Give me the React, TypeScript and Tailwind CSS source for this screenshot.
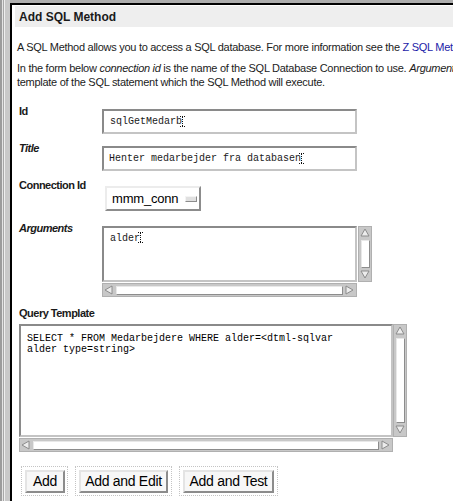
import React from "react";

const sans = { fontFamily: '"Liberation Sans", Arial, sans-serif' };
const mono = { fontFamily: '"Liberation Mono", "Courier New", monospace' };

function Cursor() {
  return (
    <svg width="5" height="11" viewBox="0 0 5 11" className="inline-block -ml-[2px] align-[-2px]">
      <path d="M0 0.5h1M2 0.5h1M4 0.5h1M0 10.5h1M2 10.5h1M4 10.5h1" stroke="#111" strokeWidth="1" />
      <path d="M2.5 1v9" stroke="#111" strokeWidth="1" strokeDasharray="1 1" />
    </svg>
  );
}

function Arrow({ dir }: { dir: "up" | "down" | "left" | "right" }) {
  const pts: Record<string, string> = {
    up: "5,1 9,8 1,8",
    down: "1,1 9,1 5,8",
    left: "1,5 8,1 8,9",
    right: "1,1 1,9 8,5",
  };
  return (
    <svg width="10" height="10" viewBox="0 0 10 10" className="shrink-0">
      <polygon points={pts[dir]} fill="#ececec" stroke="#8c8c8c" strokeWidth="1" />
    </svg>
  );
}

function VScroll({ tall }: { tall?: boolean }) {
  return (
    <div
      className={
        "w-[14px] bg-[#c8c8c8] border border-[#b0b0b0] flex flex-col items-center py-[1px] " +
        (tall ? "h-[113px]" : "h-[56px]")
      }
    >
      <Arrow dir="up" />
      <div className="flex-1 w-[9px] my-[2px] bg-white border border-t-[#e8e8e8] border-l-[#e8e8e8] border-b-[#8c8c8c] border-r-[#8c8c8c]" />
      <Arrow dir="down" />
    </div>
  );
}

function HScroll({ wide }: { wide?: boolean }) {
  return (
    <div
      className={
        "h-[14px] bg-[#c8c8c8] border border-[#b0b0b0] flex items-center px-[1px] " +
        (wide ? "w-[374px]" : "w-[255px]")
      }
    >
      <Arrow dir="left" />
      <div className="flex-1 h-[9px] mx-[2px] bg-white border border-t-[#e8e8e8] border-l-[#e8e8e8] border-b-[#8c8c8c] border-r-[#8c8c8c]" />
      <Arrow dir="right" />
    </div>
  );
}

function Btn({ label, w, iw }: { label: string; w: string; iw: string }) {
  return (
    <div className={"h-[30px] border border-dotted border-[#c4c4c4] flex items-center pl-[3px] " + w}>
      <div
        className={
          "h-[23px] bg-[#f7f7f7] border-2 border-t-[#e4e4e4] border-l-[#e4e4e4] border-b-[#8c8c8c] border-r-[#8c8c8c] flex items-center justify-center text-[14px] tracking-[-0.3px] text-black whitespace-nowrap " +
          iw
        }
        style={sans}
      >
        {label}
      </div>
    </div>
  );
}

const inputBorder =
  "border-2 border-t-[#8a8a8a] border-l-[#8a8a8a] border-b-[#c4c4c4] border-r-[#c4c4c4] bg-white";

export default function App() {
  return (
    <div className="w-[453px] h-[501px] overflow-hidden flex bg-white" style={sans}>
      {/* left frame gutter */}
      <div className="flex h-full shrink-0">
        <div className="w-[2px] bg-[#9c9c9c]" />
        <div className="w-[1px] bg-[#e4e4e4]" />
        <div className="w-[1px] bg-[#a8a8a8]" />
        <div className="w-[1px] bg-[#eeeeee]" />
        <div className="w-[5px] bg-[#c9c9c9]" />
      </div>
      <div className="flex-1 flex flex-col min-w-0">
        <div className="h-[3px] bg-[#adadad] shrink-0" />
        <div className="flex-1 border-t-2 border-l-2 border-black bg-white min-w-0 overflow-hidden">
          {/* title bar */}
          <div className="ml-[3px] mt-[1px] h-[21px] bg-[#eeeeee] pl-[4px] pt-[1px] text-[12px] font-bold leading-[21px] text-[#1a1a1a] whitespace-nowrap">
            Add SQL Method
          </div>

          <div className="pl-[5px] text-[11px] leading-[13px] tracking-[-0.28px] text-[#1c1c1c] whitespace-nowrap">
            <div className="mt-[14px]">
              A SQL Method allows you to access a SQL database. For more information see the{" "}
              <span className="text-[#1c1ca8]">Z SQL Methods User&apos;s Guide</span>.
            </div>
            <div className="mt-[8px]">
              In the form below <i>connection id</i> is the name of the SQL Database Connection to use.{" "}
              <i>Arguments</i> are the arguments that the SQL Method takes. The <i>query template</i> is the
            </div>
            <div className="mt-[1px]">template of the SQL statement which the SQL Method will execute.</div>
          </div>

          {/* form */}
          <div className="pl-[7px] text-[11px] leading-[13px] text-[#1a1a1a]">
            {/* Id */}
            <div className="flex mt-[16px]">
              <div className="w-[83px] font-bold tracking-[-0.5px]">Id</div>
              <div className={"mt-[4px] w-[255px] h-[25px] flex items-center pl-[6px] text-[10px] " + inputBorder} style={mono}>
                sqlGetMedarb
                <Cursor />
              </div>
            </div>
            {/* Title */}
            <div className="flex mt-[8px]">
              <div className="w-[83px] font-bold italic tracking-[-0.5px]">Title</div>
              <div className={"mt-[4px] w-[255px] h-[25px] flex items-center pl-[5px] text-[10px] " + inputBorder} style={mono}>
                Henter medarbejder fra databasen
                <Cursor />
              </div>
            </div>
            {/* Connection */}
            <div className="flex mt-[8px]">
              <div className="w-[83px] font-bold tracking-[-0.5px] whitespace-nowrap">Connection Id</div>
              <div className="mt-[7px] ml-[3px] w-[96px] h-[25px] bg-white border-2 border-t-[#ececec] border-l-[#ececec] border-b-[#8c8c8c] border-r-[#8c8c8c] flex items-center pl-[5px] gap-[7px]">
                <span className="text-[13px] text-black leading-none tracking-[-0.2px]">mmm_conn</span>
                <span className="w-[12px] h-[6px] bg-[#e0e0e0] border border-t-[#f4f4f4] border-l-[#f4f4f4] border-b-[#8c8c8c] border-r-[#8c8c8c]" />
              </div>
            </div>
            {/* Arguments */}
            <div className="flex mt-[11px]">
              <div className="w-[83px] font-bold italic tracking-[-0.5px]">Arguments</div>
              <div className="mt-[4px] flex flex-col">
                <div className="flex gap-[1px]">
                  <div className={"w-[255px] h-[56px] pl-[6px] pt-[4px] text-[10px] leading-[11px] " + inputBorder} style={mono}>
                    alder
                    <Cursor />
                  </div>
                  <VScroll />
                </div>
                <div className="mt-[1px]">
                  <HScroll />
                </div>
              </div>
            </div>
            {/* Query Template */}
            <div className="mt-[10px] font-bold tracking-[-0.5px]">Query Template</div>
            <div className="mt-[4px] flex">
              <div className={"w-[374px] h-[113px] pl-[6px] pt-[7px] text-[10px] leading-[11px] text-black whitespace-pre" + " " + inputBorder} style={mono}>
                {"SELECT * FROM Medarbejdere WHERE alder=<dtml-sqlvar\nalder type=string>"}
              </div>
              <VScroll tall />
            </div>
            <div className="mt-[1px]">
              <HScroll wide />
            </div>

            {/* Buttons */}
            <div className="flex gap-[7px] mt-[14px] ml-[2px]">
              <Btn label="Add" w="w-[47px]" iw="w-[40px]" />
              <Btn label="Add and Edit" w="w-[97px]" iw="w-[89px]" />
              <Btn label="Add and Test" w="w-[99px]" iw="w-[91px]" />
            </div>
          </div>
        </div>
      </div>
    </div>
  );
}
